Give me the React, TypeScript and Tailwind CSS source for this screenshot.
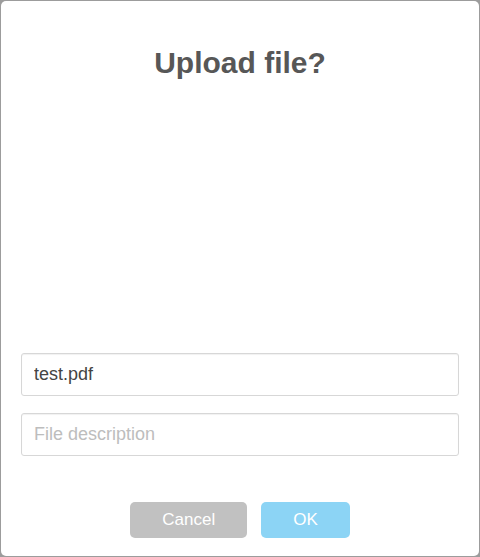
import React from "react";

export default function App() {
  return (
    <div
      className="w-[480px] h-[557px] bg-[#9c9c9c] p-px"
      style={{ fontFamily: '"Liberation Sans", Arial, sans-serif' }}
    >
      <div className="h-full bg-white rounded-[5px] px-5 pt-[42px] flex flex-col">
        <h2 className="text-[30px] leading-[40px] font-bold text-center text-[#575757]">
          Upload file?
        </h2>
        <input
          type="text"
          defaultValue="test.pdf"
          className="mt-[270px] h-[43px] w-full border border-[#d7d7d7] rounded-[3px] px-3 text-[18px] text-[#444] outline-none shadow-[inset_0_1px_1px_rgba(0,0,0,0.06)]"
          style={{ fontFamily: '"Liberation Sans", Arial, sans-serif' }}
        />
        <input
          type="text"
          placeholder="File description"
          className="mt-[17px] h-[43px] w-full border border-[#d7d7d7] rounded-[3px] px-3 text-[18px] text-[#444] placeholder:text-[#bdbdbd] outline-none shadow-[inset_0_1px_1px_rgba(0,0,0,0.06)]"
          style={{ fontFamily: '"Liberation Sans", Arial, sans-serif' }}
        />
        <div className="mt-[46px] flex justify-center gap-[14px]">
          <button className="h-[36px] px-8 rounded-[5px] bg-[#c1c1c1] text-white text-[17px]">
            Cancel
          </button>
          <button className="h-[36px] px-8 rounded-[5px] bg-[#8cd4f5] text-white text-[17px]">
            OK
          </button>
        </div>
      </div>
    </div>
  );
}
